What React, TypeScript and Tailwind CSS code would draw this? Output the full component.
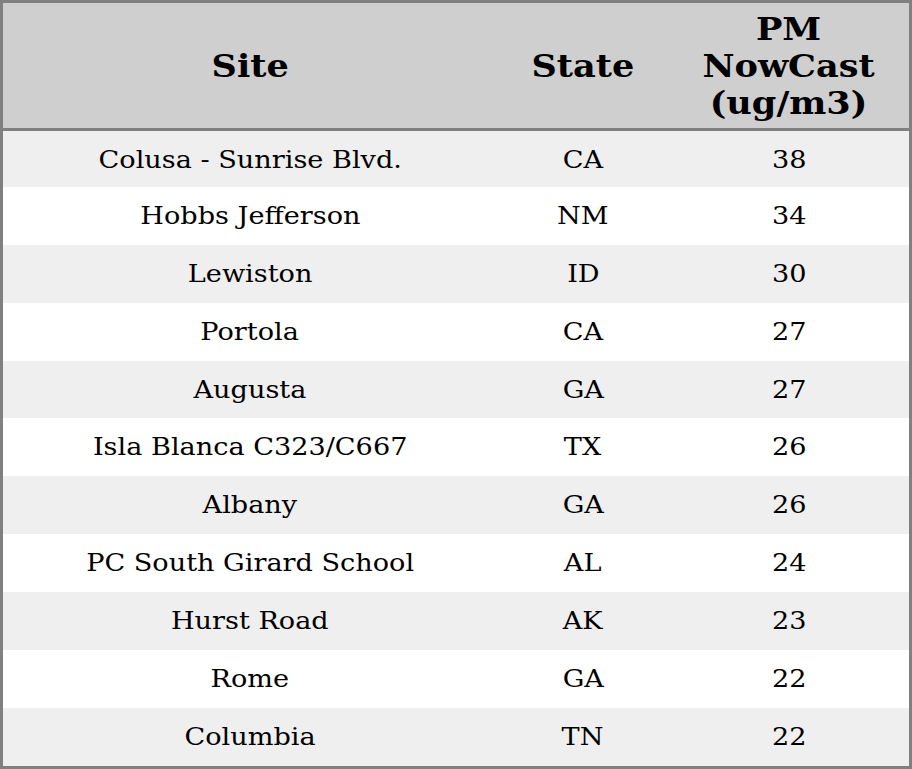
import React from 'react';

const rows: [string, string, number][] = [
  ['Colusa - Sunrise Blvd.', 'CA', 38],
  ['Hobbs Jefferson', 'NM', 34],
  ['Lewiston', 'ID', 30],
  ['Portola', 'CA', 27],
  ['Augusta', 'GA', 27],
  ['Isla Blanca C323/C667', 'TX', 26],
  ['Albany', 'GA', 26],
  ['PC South Girard School', 'AL', 24],
  ['Hurst Road', 'AK', 23],
  ['Rome', 'GA', 22],
  ['Columbia', 'TN', 22],
];

// the reference glyphs are drawn a bit wider than plain DejaVu Serif
const Head = ({ children }: { children: React.ReactNode }) => (
  <th className="text-[32px] leading-[37.25px] font-bold pt-[7.6px] pb-[5.6px] text-center align-middle">
    <span className="inline-block scale-x-[1.097]">{children}</span>
  </th>
);

const Cell = ({ first, children }: { first: boolean; children: React.ReactNode }) => (
  <td className={`text-[24px] leading-[27.9px] pt-[16px] text-center ${first ? 'pb-[12px]' : 'pb-[14px]'}`}>
    <span className="inline-block scale-x-[1.13]">{children}</span>
  </td>
);

export default function App() {
  return (
    <div className="w-[912px] h-[769px] overflow-hidden bg-white font-['DejaVu_Serif',serif] text-black">
      <div className="border-[3px] border-[#808080]">
        <table className="w-full table-fixed border-collapse">
          <colgroup>
            <col className="w-[494px]" />
            <col className="w-[172px]" />
            <col className="w-[240px]" />
          </colgroup>
          <thead>
            <tr className="bg-[#cfcfcf] border-b-[3px] border-[#808080]">
              <Head>Site</Head>
              <Head>State</Head>
              <Head>
                PM
                <br />
                NowCast
                <br />
                (ug/m3)
              </Head>
            </tr>
          </thead>
          <tbody>
            {rows.map(([site, state, pm], i) => (
              <tr key={site} className={i % 2 === 0 ? 'bg-[#efefef]' : 'bg-white'}>
                <Cell first={i === 0}>{site}</Cell>
                <Cell first={i === 0}>{state}</Cell>
                <Cell first={i === 0}>{pm}</Cell>
              </tr>
            ))}
          </tbody>
        </table>
      </div>
    </div>
  );
}
